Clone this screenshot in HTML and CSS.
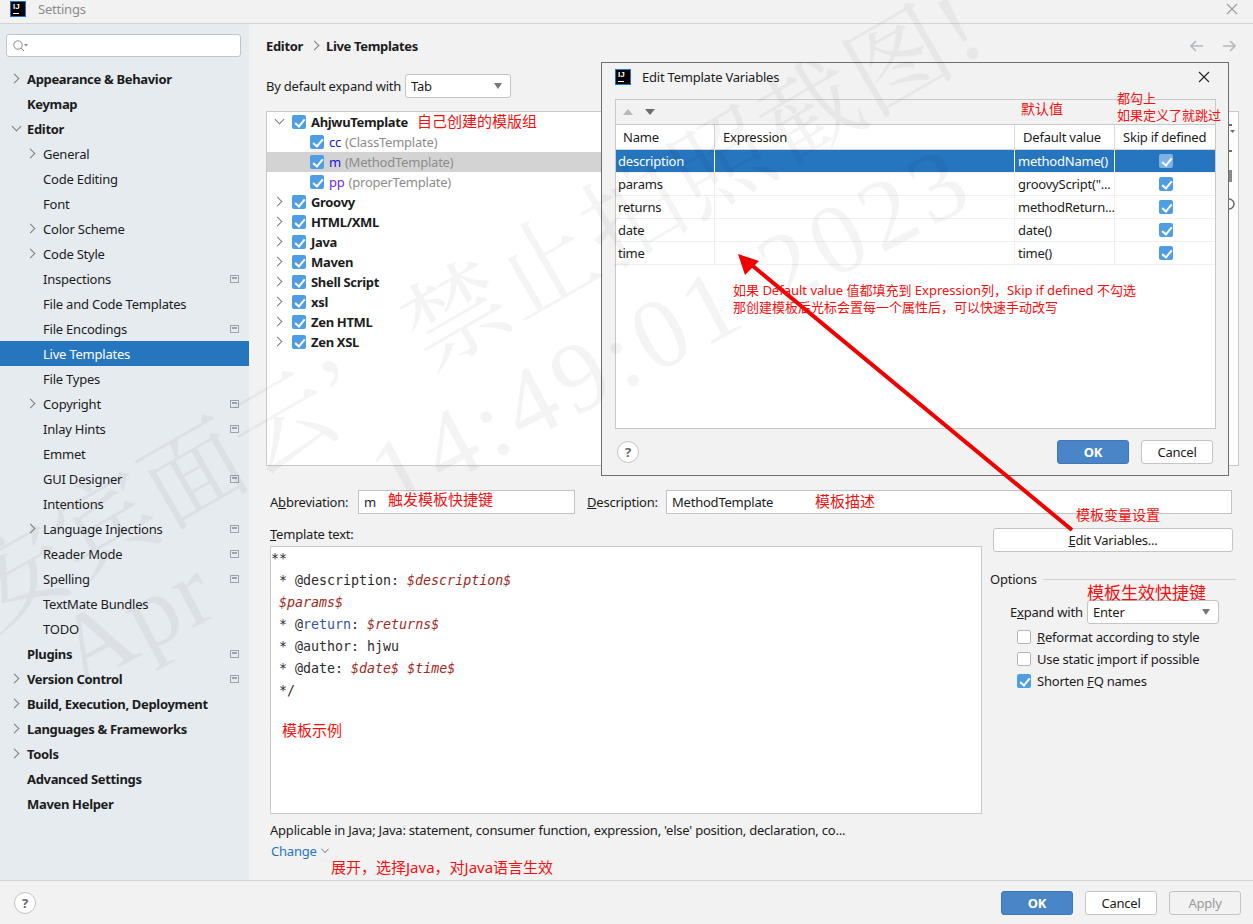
FILE: index.html
```html
<!DOCTYPE html>
<html lang="en">

<head>
    <meta charset="UTF-8">
    <title>Settings</title>
    <link rel="stylesheet" href="styles.css">
</head>

<body>
    <div class="window">

        <!-- title bar -->
        <div class="titlebar">
            <span class="logo">IJ</span>
            <span class="title-text">Settings</span>
            <svg class="close-x" width="12" height="12" viewBox="0 0 12 12"><path d="M1 1 11 11M11 1 1 11" stroke="#9a9a9a" stroke-width="1.1" fill="none"/></svg>
        </div>

        <div class="content">

            <!-- left tree -->
            <div class="sidebar">
                <div class="search">
                    <svg width="16" height="14" viewBox="0 0 16 14"><circle cx="6" cy="6" r="4.2" stroke="#8a8a8a" fill="none"/><path d="M9 9 12 12" stroke="#8a8a8a" fill="none"/><path d="M12 5h4l-2 2.4z" fill="#8a8a8a"/></svg>
                </div>
                <div class="nav">
                    <div class="nav-row top"><i class="arrow"></i>Appearance &amp; Behavior</div>
                    <div class="nav-row top"><i class="arrow none"></i>Keymap</div>
                    <div class="nav-row top"><i class="arrow open"></i>Editor</div>
                    <div class="nav-row"><i class="arrow"></i>General</div>
                    <div class="nav-row"><i class="arrow none"></i>Code Editing</div>
                    <div class="nav-row"><i class="arrow none"></i>Font</div>
                    <div class="nav-row"><i class="arrow"></i>Color Scheme</div>
                    <div class="nav-row"><i class="arrow"></i>Code Style</div>
                    <div class="nav-row"><i class="arrow none"></i>Inspections<b class="scope"></b></div>
                    <div class="nav-row"><i class="arrow none"></i>File and Code Templates</div>
                    <div class="nav-row"><i class="arrow none"></i>File Encodings<b class="scope"></b></div>
                    <div class="nav-row selected"><i class="arrow none"></i>Live Templates</div>
                    <div class="nav-row"><i class="arrow none"></i>File Types</div>
                    <div class="nav-row"><i class="arrow"></i>Copyright<b class="scope"></b></div>
                    <div class="nav-row"><i class="arrow none"></i>Inlay Hints<b class="scope"></b></div>
                    <div class="nav-row"><i class="arrow none"></i>Emmet</div>
                    <div class="nav-row"><i class="arrow none"></i>GUI Designer<b class="scope"></b></div>
                    <div class="nav-row"><i class="arrow none"></i>Intentions</div>
                    <div class="nav-row"><i class="arrow"></i>Language Injections<b class="scope"></b></div>
                    <div class="nav-row"><i class="arrow none"></i>Reader Mode<b class="scope"></b></div>
                    <div class="nav-row"><i class="arrow none"></i>Spelling<b class="scope"></b></div>
                    <div class="nav-row"><i class="arrow none"></i>TextMate Bundles</div>
                    <div class="nav-row"><i class="arrow none"></i>TODO</div>
                    <div class="nav-row top"><i class="arrow none"></i>Plugins<b class="scope"></b></div>
                    <div class="nav-row top"><i class="arrow"></i>Version Control<b class="scope"></b></div>
                    <div class="nav-row top"><i class="arrow"></i>Build, Execution, Deployment</div>
                    <div class="nav-row top"><i class="arrow"></i>Languages &amp; Frameworks</div>
                    <div class="nav-row top"><i class="arrow"></i>Tools</div>
                    <div class="nav-row top"><i class="arrow none"></i>Advanced Settings</div>
                    <div class="nav-row top"><i class="arrow none"></i>Maven Helper</div>
                </div>
            </div>

            <!-- right panel -->
            <div class="main">
                <div class="crumbs">
                    <b>Editor</b><i class="arrow crumb-arrow"></i><b>Live Templates</b>
                    <svg class="nav-arrows" width="46" height="12" viewBox="0 0 46 12"><path d="M6 1 1 6l5 5M1 6h12M40 1l5 5-5 5M45 6H33" stroke="#b5b9bd" stroke-width="1.6" fill="none"/></svg>
                </div>
                <div class="expand-row">
                    <span class="expand-label">By default expand with</span>
                    <div class="combo expand-combo">Tab</div>
                </div>

                <div class="tree-box">
                    <div class="tree">
                        <div class="tree-row group"><i class="arrow open"></i><i class="check"></i>AhjwuTemplate</div>
                        <div class="tree-row leaf"><i class="check"></i><span class="key k1">cc</span> <span class="dim">(ClassTemplate)</span></div>
                        <div class="tree-row leaf current"><i class="check"></i><span class="key k1">m</span> <span class="dim">(MethodTemplate)</span></div>
                        <div class="tree-row leaf"><i class="check"></i><span class="key k2">pp</span> <span class="dim">(properTemplate)</span></div>
                        <div class="tree-row group"><i class="arrow"></i><i class="check"></i>Groovy</div>
                        <div class="tree-row group"><i class="arrow"></i><i class="check"></i>HTML/XML</div>
                        <div class="tree-row group"><i class="arrow"></i><i class="check"></i>Java</div>
                        <div class="tree-row group"><i class="arrow"></i><i class="check"></i>Maven</div>
                        <div class="tree-row group"><i class="arrow"></i><i class="check"></i>Shell Script</div>
                        <div class="tree-row group"><i class="arrow"></i><i class="check"></i>xsl</div>
                        <div class="tree-row group"><i class="arrow"></i><i class="check"></i>Zen HTML</div>
                        <div class="tree-row group"><i class="arrow"></i><i class="check"></i>Zen XSL</div>
                    </div>
                    <svg class="tree-tools" width="16" height="100" viewBox="0 0 16 100"><path d="M2 13h9M6 7v12M2 39h9" stroke="#6e6e6e" stroke-width="2" fill="none"/><path d="M9 18h5l-2.5 3z" fill="#6e6e6e"/><path d="M3 58h8v12H3z" fill="#8a8a8a"/><circle cx="8" cy="92" r="5" stroke="#6e6e6e" stroke-width="1.6" fill="none"/></svg>
                </div>

                <div class="abbrev-row">
                    <label class="abbrev-label">A<u>b</u>breviation:</label>
                    <div class="field abbrev-field">m</div>
                    <label class="desc-label"><u>D</u>escription:</label>
                    <div class="field desc-field">MethodTemplate</div>
                </div>

                <div class="template-row">
                    <div class="template-left">
                        <div class="template-label"><u>T</u>emplate text:</div>
                        <div class="editor">
                            <div>**</div>
                            <div> * @description: <em>$description$</em></div>
                            <div> <em>$params$</em></div>
                            <div> * @<span class="tag">return</span>: <em>$returns$</em></div>
                            <div> * @author: hjwu</div>
                            <div> * @date: <em>$date$</em> <em>$time$</em></div>
                            <div> */</div>
                        </div>
                    </div>
                    <div class="template-right">
                        <div class="btn edit-btn"><span><u>E</u>dit Variables...</span></div>
                        <div class="options-title">Options<span class="rule"></span></div>
                        <div class="expand-with">
                            <span class="expand-with-label">E<u>x</u>pand with</span>
                            <div class="combo enter-combo">Enter</div>
                        </div>
                        <div class="option"><i class="check off"></i><span><u>R</u>eformat according to style</span></div>
                        <div class="option"><i class="check off"></i><span>Use static <u>i</u>mport if possible</span></div>
                        <div class="option"><i class="check"></i><span>Shorten <u>F</u>Q names</span></div>
                    </div>
                </div>

                <div class="applicable">Applicable in Java; Java: statement, consumer function, expression, 'else' position, declaration, co...</div>
                <div class="change">Change<i class="arrow open link-arrow"></i></div>
            </div>
        </div>

        <!-- bottom bar -->
        <div class="footer">
            <span class="help">?</span>
            <div class="btn primary">OK</div>
            <div class="btn">Cancel</div>
            <div class="btn disabled">Apply</div>
        </div>

        <!-- dialog over the settings page -->
        <div class="dialog">
            <div class="dialog-head">
                <span class="logo">IJ</span>
                <span class="dialog-title">Edit Template Variables</span>
                <svg class="dialog-x" width="12" height="12" viewBox="0 0 12 12"><path d="M1 1 11 11M11 1 1 11" stroke="#222" stroke-width="1.1" fill="none"/></svg>
            </div>
            <div class="var-box">
                <div class="var-tools"><i class="tri up"></i><i class="tri down"></i></div>
                <div class="var-grid var-head">
                    <span>Name</span><span>Expression</span><span>Default value</span><span>Skip if defined</span>
                </div>
                <div class="var-grid var-row sel"><span>description</span><span></span><span>methodName()</span><span><i class="check"></i></span></div>
                <div class="var-grid var-row"><span>params</span><span></span><span>groovyScript("...</span><span><i class="check"></i></span></div>
                <div class="var-grid var-row"><span>returns</span><span></span><span>methodReturn...</span><span><i class="check"></i></span></div>
                <div class="var-grid var-row"><span>date</span><span></span><span>date()</span><span><i class="check"></i></span></div>
                <div class="var-grid var-row"><span>time</span><span></span><span>time()</span><span><i class="check"></i></span></div>
            </div>
            <div class="dialog-foot">
                <span class="help">?</span>
                <div class="btn primary">OK</div>
                <div class="btn">Cancel</div>
            </div>
        </div>

        <!-- watermark -->
        <div class="mark m1">安宾面云’</div>
        <div class="mark m2">禁止拍照截图!</div>
        <div class="mark m3">Apr</div>
        <div class="mark m4">14:49:01 2023</div>

        <!-- red notes drawn on the screenshot -->
        <svg class="red-arrow" width="1253" height="924" viewBox="0 0 1253 924">
            <path d="M1072 530 748 262" stroke="#f00000" stroke-width="4" fill="none"/>
            <path d="M738 254 759 261 745 275z" fill="#f00000"/>
        </svg>
        <div class="note n15" style="left:417px;top:111px">自己创建的模版组</div>
        <div class="note n14" style="left:1021px;top:99px">默认值</div>
        <div class="note n13" style="left:1117px;top:90px">都勾上<br>如果定义了就跳过</div>
        <div class="note n13" style="left:733px;top:282px">如果 Default value 值都填充到 Expression列，Skip if defined 不勾选<br>那创建模板后光标会置每一个属性后，可以快速手动改写</div>
        <div class="note n15" style="left:388px;top:489px">触发模板快捷键</div>
        <div class="note n15" style="left:815px;top:491px">模板描述</div>
        <div class="note n14" style="left:1076px;top:505px">模板变量设置</div>
        <div class="note n17" style="left:1087px;top:581px">模板生效快捷键</div>
        <div class="note n15" style="left:282px;top:720px">模板示例</div>
        <div class="note n15" style="left:331px;top:857px">展开，选择Java，对Java语言生效</div>
    </div>
</body>

</html>
```

FILE: styles.css
```css
* {
    box-sizing: border-box;
}

body {
    margin: 0;
    font-family: "Noto Sans", "Noto Sans CJK SC", sans-serif;
    font-size: 13px;
    letter-spacing: -0.22px;
    color: #1c1c1c;
    background-color: #f2f2f2;
}

b,
.nav-row.top,
.tree-row.group {
    letter-spacing: -0.33px;
}

.window {
    position: relative;
    width: 1253px;
    height: 924px;
    overflow: hidden;
    display: flex;
    flex-direction: column;
    background-color: #f2f2f2;
}

/* title bar */
.titlebar {
    flex: none;
    height: 24px;
    display: flex;
    align-items: center;
    padding-left: 10px;
    padding-bottom: 6px;
    border-bottom: 1px solid #d4d4d4;
}

.logo {
    flex: none;
    width: 16px;
    height: 16px;
    background-color: #000;
    border: 1px solid #1d6fd0;
    color: #fff;
    font-family: "Liberation Sans", sans-serif;
    font-size: 8px;
    font-weight: bold;
    letter-spacing: 0;
    line-height: 10px;
    padding-left: 2px;
    position: relative;
}

.logo::after {
    content: "";
    position: absolute;
    left: 2px;
    bottom: 2px;
    width: 6px;
    height: 1px;
    background-color: #fff;
}

.title-text {
    margin-left: 12px;
    color: #8c8c8c;
}

.close-x {
    margin-left: auto;
    margin-right: 15px;
}

.content {
    flex: 1;
    display: flex;
    min-height: 0;
}

/* left tree */
.sidebar {
    flex: none;
    width: 249px;
    background-color: #e6ebf0;
    padding-top: 10px;
}

.search {
    width: 235px;
    height: 23px;
    margin-left: 6px;
    background-color: #fff;
    border: 1px solid #c4c4c4;
    border-radius: 3px;
    padding: 4px 0 0 5px;
}

.search svg {
    display: block;
}

.nav {
    margin-top: 9px;
}

.nav-row {
    height: 25px;
    display: flex;
    align-items: center;
    padding-left: 27px;
    padding-right: 10px;
}

.nav-row.top {
    font-weight: bold;
    padding-left: 11px;
}

.nav-row.selected {
    background-color: #2675bf;
    color: #fff;
}

.arrow {
    flex: none;
    display: inline-block;
    width: 16px;
    height: 10px;
    position: relative;
}

.arrow::before {
    content: "";
    position: absolute;
    left: 0;
    top: 1px;
    width: 6px;
    height: 6px;
    border-top: 1.3px solid #7d7d7d;
    border-right: 1.3px solid #7d7d7d;
    transform: rotate(45deg);
}

.arrow.open::before {
    top: -1px;
    left: 2px;
    transform: rotate(135deg);
}

.arrow.none::before {
    display: none;
}

.scope {
    margin-left: auto;
    width: 9px;
    height: 8px;
    border: 1px solid #9aa3ab;
    background-color: #e6ebf0;
    position: relative;
}

.scope::after {
    content: "";
    position: absolute;
    left: 1px;
    top: 1px;
    width: 5px;
    height: 2px;
    background-color: #9aa3ab;
}

/* right panel */
.main {
    flex: 1;
    min-width: 0;
    height: 856px;
    padding-left: 17px;
}

.crumbs {
    height: 20px;
    margin-top: 12px;
    display: flex;
    align-items: center;
}

.crumb-arrow {
    margin-left: 8px;
    width: 15px;
}

.nav-arrows {
    margin-left: auto;
    margin-right: 17px;
}

.expand-row {
    display: flex;
    align-items: center;
    margin-top: 18px;
    height: 24px;
}

.expand-label {
    width: 139px;
}

.combo {
    height: 24px;
    line-height: 22px;
    padding-left: 5px;
    background-color: #fff;
    border: 1px solid #c4c4c4;
    border-radius: 3px;
    position: relative;
}

.combo::after {
    content: "";
    position: absolute;
    right: 8px;
    top: 8px;
    border-left: 4px solid transparent;
    border-right: 4px solid transparent;
    border-top: 6px solid #777;
}

.expand-combo {
    width: 106px;
}

.tree-box {
    width: 973px;
    height: 355px;
    margin-top: 13px;
    background-color: #fff;
    border: 1px solid #c9c9c9;
    display: flex;
    justify-content: space-between;
}

.tree {
    flex: 1;
}

.tree-tools {
    flex: none;
    margin: 0 1px 0 0;
}

.tree-row {
    height: 20px;
    display: flex;
    align-items: center;
}

.tree-row .dim {
    color: #8c8c8c;
    margin-left: 4px;
}

.tree-row.group {
    font-weight: bold;
    padding-left: 7px;
}

.tree-row.group .arrow {
    width: 18px;
}

.tree-row.leaf {
    padding-left: 43px;
}

.tree-row.current {
    background-color: #d3d3d3;
}

.tree-row .check {
    margin-right: 5px;
}

.key.k1 {
    color: #1515e0;
}

.key.k2 {
    color: #6a2be2;
}

.check {
    flex: none;
    display: inline-block;
    width: 14px;
    height: 14px;
    background-color: #4f9ee3;
    border-radius: 2px;
    position: relative;
}

.check::after {
    content: "";
    position: absolute;
    left: 5px;
    top: 2px;
    width: 4px;
    height: 8px;
    border-right: 2px solid #fff;
    border-bottom: 2px solid #fff;
    transform: rotate(40deg);
}

.check.off {
    background-color: #fff;
    border: 1px solid #b5b5b5;
}

.check.off::after {
    display: none;
}

.abbrev-row {
    display: flex;
    align-items: center;
    height: 24px;
    margin-top: 24px;
    margin-left: 4px;
}

.abbrev-label {
    width: 88px;
}

.field {
    height: 24px;
    line-height: 22px;
    padding-left: 5px;
    background-color: #fff;
    border: 1px solid #c4c4c4;
}

.abbrev-field {
    width: 217px;
}

.desc-label {
    width: 79px;
    margin-left: 12px;
}

.desc-field {
    width: 566px;
}

.template-row {
    display: flex;
    margin-left: 4px;
    margin-top: 14px;
}

.template-left {
    width: 712px;
}

.template-label {
    height: 18px;
    line-height: 12px;
}

.editor {
    height: 268px;
    padding-top: 1px;
    background-color: #fff;
    border: 1px solid #c9c9c9;
    font-family: "DejaVu Sans Mono", monospace;
    font-size: 13.3px;
    letter-spacing: 0;
    color: #2b2b2b;
}

.editor div {
    height: 22px;
    line-height: 22px;
    white-space: pre;
}

.editor em {
    color: #9c2a1c;
}

.editor .tag {
    color: #2f55a8;
}

.template-right {
    width: 240px;
    margin-left: 11px;
}

.btn {
    width: 72px;
    height: 24px;
    line-height: 22px;
    text-align: center;
    background-color: #fff;
    border: 1px solid #c4c4c4;
    border-radius: 3px;
}

.edit-btn {
    width: 240px;
}

.btn.primary {
    background-color: #4a86c7;
    border-color: #3f78b5;
    color: #fff;
    font-weight: bold;
}

.btn.disabled {
    background-color: #f2f2f2;
    color: #9a9a9a;
}

.options-title {
    display: flex;
    align-items: center;
    margin-top: 18px;
    margin-left: -3px;
    margin-right: -3px;
    height: 18px;
}

.rule {
    flex: 1;
    height: 1px;
    margin-left: 6px;
    background-color: #d0d0d0;
}

.expand-with {
    display: flex;
    align-items: center;
    margin-top: 12px;
    margin-left: 17px;
    height: 24px;
}

.expand-with-label {
    width: 77px;
}

.enter-combo {
    width: 132px;
}

.option {
    display: flex;
    align-items: center;
    height: 22px;
    margin-left: 24px;
}

.option .check {
    margin-right: 6px;
}

.expand-with + .option {
    margin-top: 2px;
}

.applicable {
    margin-left: 4px;
    margin-top: 6px;
    height: 20px;
    line-height: 20px;
}

.change {
    display: flex;
    align-items: center;
    margin-left: 5px;
    margin-top: 1px;
    height: 20px;
    color: #2675bf;
}

.link-arrow {
    margin-left: 2px;
    transform: scale(0.8);
}

/* bottom bar */
.footer {
    flex: none;
    height: 44px;
    display: flex;
    align-items: center;
    padding: 1px 12px 0;
    gap: 12px;
    border-top: 1px solid #d4d4d4;
}

.help {
    width: 22px;
    height: 22px;
    line-height: 20px;
    text-align: center;
    background-color: #fff;
    border: 1px solid #c4c4c4;
    border-radius: 50%;
    color: #666;
    font-weight: bold;
    margin-left: 2px;
    margin-right: auto;
}

/* dialog */
.dialog {
    position: absolute;
    left: 601px;
    top: 62px;
    width: 628px;
    height: 414px;
    background-color: #f2f2f2;
    border: 1px solid #6e6e6e;
    padding: 0 12px 0 13px;
}

.dialog-head {
    height: 29px;
    display: flex;
    align-items: center;
    padding-bottom: 2px;
}

.dialog-title {
    margin-left: 11px;
}

.dialog-x {
    margin-left: auto;
    margin-right: 6px;
}

.var-box {
    margin-top: 7px;
    height: 330px;
    background-color: #fff;
    border: 1px solid #c9c9c9;
}

.var-tools {
    height: 25px;
    display: flex;
    align-items: center;
    gap: 12px;
    padding-left: 7px;
    background-color: #f2f2f2;
    border-bottom: 1px solid #c9c9c9;
}

.tri {
    width: 0;
    height: 0;
    border-left: 5px solid transparent;
    border-right: 5px solid transparent;
}

.tri.up {
    border-bottom: 6px solid #b8b8b8;
}

.tri.down {
    border-top: 6px solid #6e6e6e;
}

.var-grid {
    display: grid;
    grid-template-columns: 99px 300px 100px 100px;
}

.var-head {
    height: 25px;
    border-bottom: 1px solid #d4d4d4;
}

.var-head span {
    padding-left: 8px;
    line-height: 24px;
    border-right: 1px solid #dcdcdc;
}

.var-head span:first-child {
    padding-left: 7px;
}

.var-head span:last-child {
    border-right: none;
}

.var-row {
    height: 23px;
    border-bottom: 1px solid #f0f0f0;
}

.var-row span {
    padding-left: 2px;
    line-height: 22px;
    border-right: 1px solid #f0f0f0;
    white-space: nowrap;
}

.var-row span:nth-child(3) {
    padding-left: 3px;
}

.var-row span:last-child {
    border-right: none;
    display: flex;
    align-items: center;
    justify-content: center;
}

.var-row.sel {
    background-color: #2675bf;
    color: #fff;
}

.var-row.sel span {
    border-right-color: #fff;
}

.var-row.sel .check {
    background-color: #7fb2e4;
}

.dialog-foot {
    display: flex;
    align-items: center;
    gap: 12px;
    margin-top: 11px;
    height: 24px;
    padding-right: 3px;
}

/* watermark */
.mark {
    position: absolute;
    font-family: "Liberation Serif", "Noto Serif CJK SC", serif;
    font-size: 100px;
    line-height: 1;
    letter-spacing: 2px;
    color: rgba(0, 0, 0, 0.045);
    white-space: nowrap;
    transform-origin: 0 50%;
    transform: rotate(-30deg);
    pointer-events: none;
}

.m1 {
    left: -25px;
    top: 553px;
}

.m2 {
    left: 414px;
    top: 293px;
}

.m3 {
    left: 64px;
    top: 609px;
    transform: rotate(-28deg);
}

.m4 {
    left: 378px;
    top: 434px;
    letter-spacing: 6.5px;
    transform: rotate(-28deg);
}

/* red notes */
.red-arrow {
    position: absolute;
    left: 0;
    top: 0;
}

.note {
    position: absolute;
    color: #f41010;
    white-space: nowrap;
    line-height: 1.4;
    letter-spacing: 0;
}

.n13 {
    font-size: 13px;
    line-height: 17px;
}

.n14 {
    font-size: 14px;
}

.n15 {
    font-size: 15px;
}

.n17 {
    font-size: 17px;
}
```
